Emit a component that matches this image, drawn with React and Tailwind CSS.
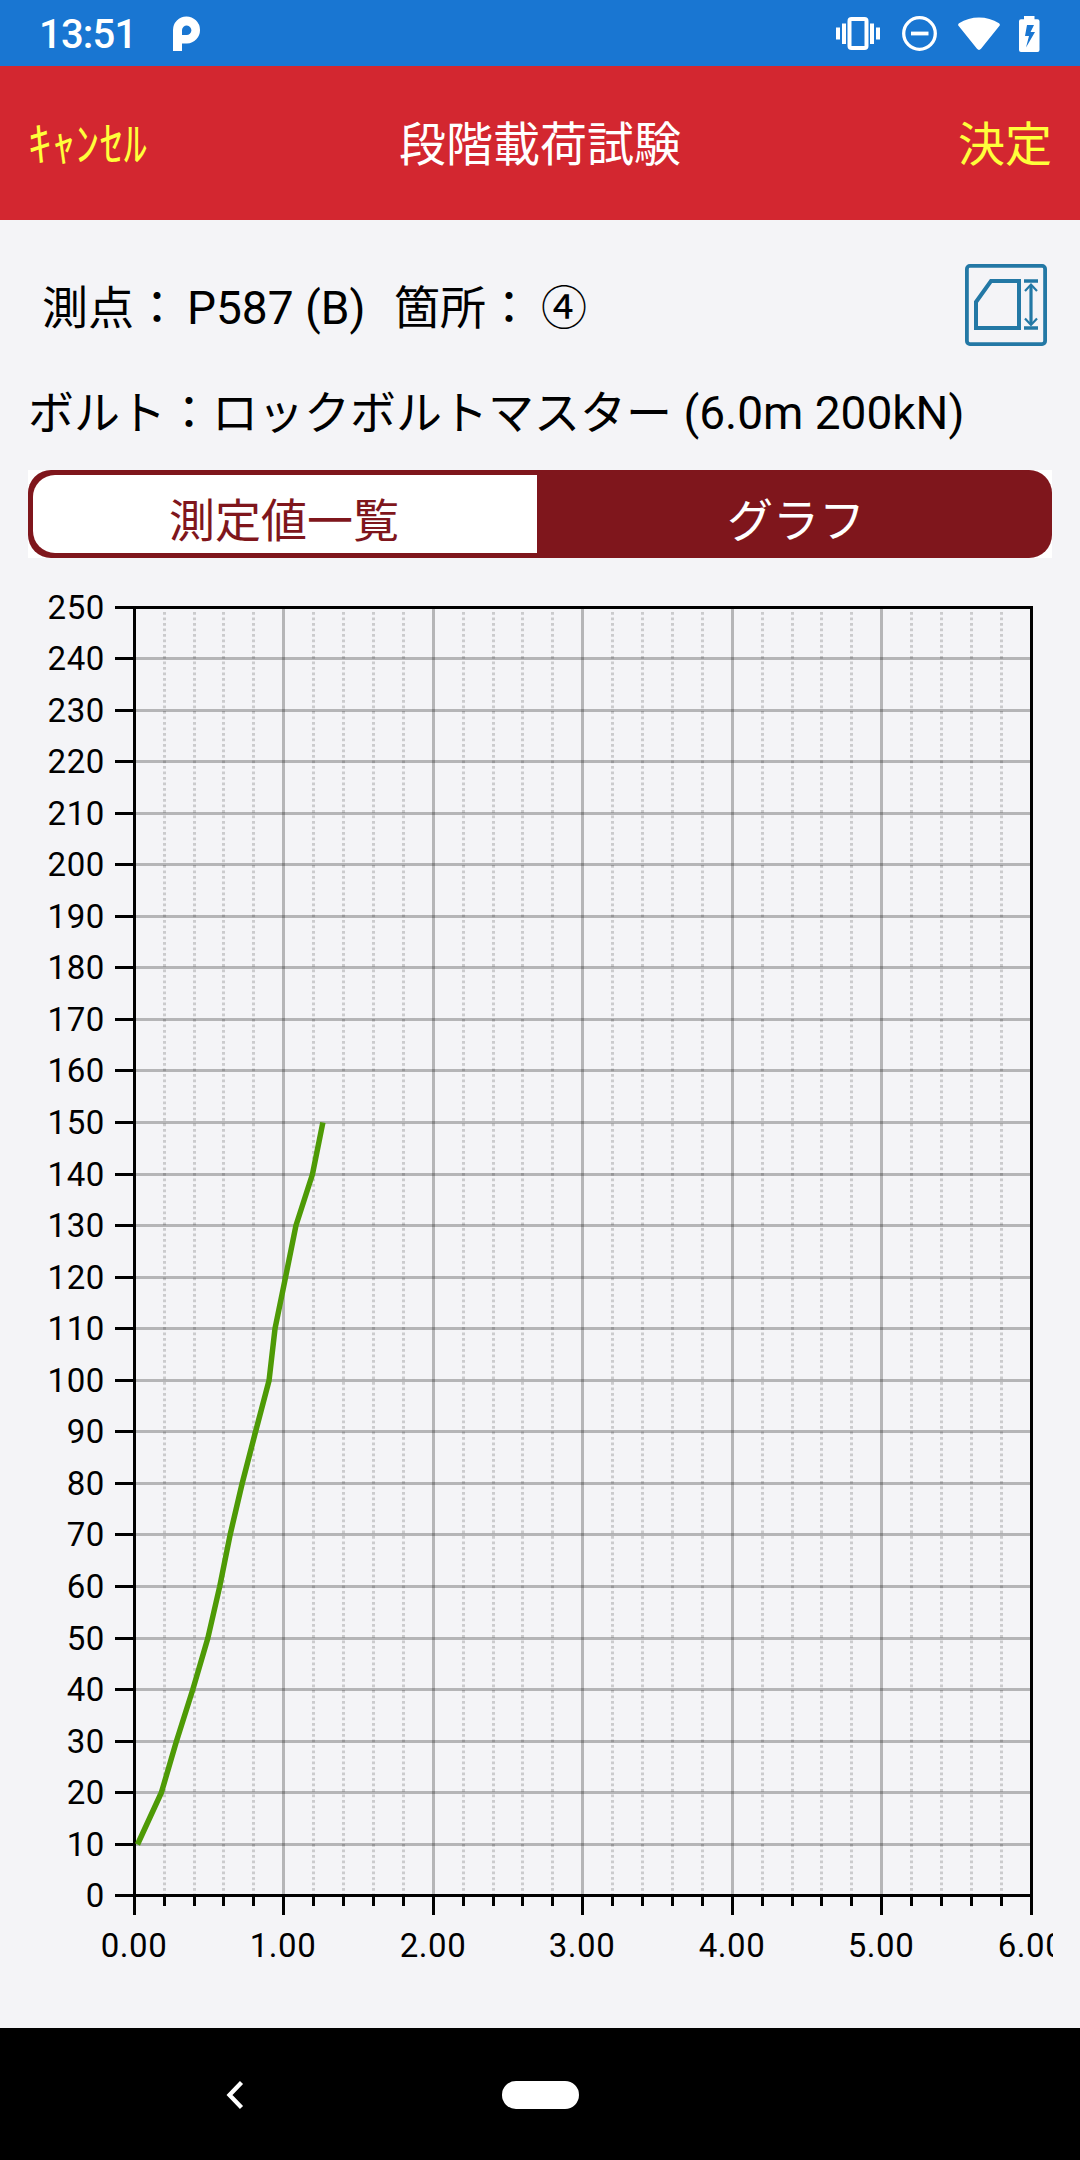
import { useState } from 'react'

const PLOT = { left: 134.5, right: 1031.5, top: 607.5, bottom: 1895.5 }
const MAX_X = 6
const MAX_Y = 250

// [displacement mm, load kN]
const measurements = [
  [0.02, 10],
  [0.18, 20],
  [0.28, 30],
  [0.39, 40],
  [0.49, 50],
  [0.57, 60],
  [0.64, 70],
  [0.72, 80],
  [0.81, 90],
  [0.9, 100],
  [0.94, 110],
  [1.01, 120],
  [1.08, 130],
  [1.19, 140],
  [1.26, 150]
]

// grid lines snap to half pixels so that they stay sharp
const scaleX = value => PLOT.left + Math.floor(value * 149.5 + 0.25)
const scaleY = value => PLOT.top + Math.floor((MAX_Y - value) * 5.1551)

const yTicks = Array.from({ length: 26 }, (_, i) => i * 10)
const xTicks = Array.from({ length: 31 }, (_, i) => i)

function StatusBar() {
  return (
    <div className="flex h-[66px] shrink-0 items-center bg-[#1976d2] text-white">
      <span className="ml-[39px] w-[96px] whitespace-nowrap pt-[4px] text-[40px] font-medium leading-none tracking-[-0.8px]">13:51</span>
      <svg className="ml-[38px] mt-[2px]" width="27" height="36" viewBox="0 0 27 36" fill="currentColor">
        <path
          fillRule="evenodd"
          d="M0 35V14A13.5 13.5 0 1 1 14 27.500H9V35ZM9 19H13.500A4.700 4.700 0 1 0 9 14Z"
        />
      </svg>
      <div className="ml-auto mr-[40px] flex items-center">
        <svg width="44" height="33" viewBox="0 0 44 33" fill="currentColor">
          <path d="M0 10.500h4v12H0zM6 6.500h4v20.500H6zM34 6.500h4v20.500h-4zM40 10.500h4v12h-4z" />
          <rect x="13.500" y="2" width="17" height="29" rx="2" fill="none" stroke="currentColor" strokeWidth="4" />
        </svg>
        <svg className="ml-[22px]" width="35" height="35" viewBox="0 0 35 35" fill="none" stroke="currentColor" strokeWidth="3.3">
          <circle cx="17.500" cy="17.500" r="15.800" />
          <path d="M9 17.500h17.500" strokeWidth="3.8" />
        </svg>
        <svg className="ml-[21px]" width="42" height="33" viewBox="0 0 42 33" fill="currentColor">
          <path d="M.7 9C-.2 7.800 0 7 1 6.300C13-1.600 29-1.600 41 6.300C42 7 42.200 7.800 41.300 9L23 31.800C21.800 33.300 20.200 33.300 19 31.800Z" />
        </svg>
        <svg className="ml-[19px] mt-[1px]" width="21" height="36" viewBox="0 0 21 36" fill="currentColor">
          <path
            fillRule="evenodd"
            d="M5 0h10.500v3.300h3a2 2 0 0 1 2 2V34a2 2 0 0 1-2 2H2a2 2 0 0 1-2-2V5.300a2 2 0 0 1 2-2h3zM8 9L6 20H10L7 31.500L16 16H11.500L15 9Z"
          />
        </svg>
      </div>
    </div>
  )
}

function Header() {
  return (
    <header className="grid h-[154px] shrink-0 grid-cols-3 items-center bg-[#d32730] px-[28px] pt-[5px] text-[47px] text-[#ffff3b]">
      <button className="whitespace-nowrap text-left tracking-[0.4px]">ｷｬﾝｾﾙ</button>
      <h1 className="whitespace-nowrap text-center text-white">段階載荷試験</h1>
      <button className="text-right">決定</button>
    </header>
  )
}

function SectionIcon() {
  return (
    <svg width="82" height="82" viewBox="0 0 82 82" fill="none" stroke="#2378a5">
      <rect x="1.900" y="1.900" width="78.200" height="78.200" rx="3" strokeWidth="3.8" />
      <path d="M11 64V38L26 17H54V64Z" strokeWidth="4" />
      <path d="M59 17h14M59 64h14" strokeWidth="3.6" />
      <path d="M66 21v39" strokeWidth="3.2" />
      <path d="M60 27l6-6.500 6 6.500M60 54.500l6 6.500 6-6.500" strokeWidth="2.2" />
    </svg>
  )
}

function Tabs({ active, onChange }) {
  return (
    <div className="mx-[28px] h-[88px] bg-white">
      <div className="flex h-full rounded-[23px] bg-[#7f161c] p-[5px] text-[46px]" role="tablist">
        <button
          role="tab"
          aria-selected={active === 'list'}
          onClick={() => onChange('list')}
          className="w-[504px] rounded-l-[22px] bg-white pt-[13px] pr-[2px] leading-none text-[#7f161c]"
        >
          測定値一覧
        </button>
        <button
          role="tab"
          aria-selected={active === 'graph'}
          onClick={() => onChange('graph')}
          className="flex-1 pt-[13px] pl-[8px] leading-none text-white"
        >
          グラフ
        </button>
      </div>
    </div>
  )
}

function LoadChart() {
  const points = measurements
    .map(([x, y]) => {
      const px = PLOT.left + (x / MAX_X) * (PLOT.right - PLOT.left)
      return `${px},${scaleY(y)}`
    })
    .join(' ')

  return (
    <svg className="block" width="1053" height="1442" viewBox="0 558 1053 1442">
      <g stroke="#000" strokeOpacity="0.26" strokeWidth="3">
        {yTicks.slice(1, -1).map(value => (
          <line key={value} x1={PLOT.left} x2={PLOT.right} y1={scaleY(value)} y2={scaleY(value)} />
        ))}
      </g>
      {xTicks.slice(1, -1).map(i => {
        const x = scaleX(i / 5)
        const major = i % 5 === 0
        return (
          <line
            key={i}
            x1={x}
            x2={x}
            y1={major ? PLOT.top : PLOT.top + 4.5}
            y2={PLOT.bottom}
            stroke="#000"
            strokeOpacity={major ? 0.26 : 0.17}
            strokeWidth="3"
            strokeDasharray={major ? undefined : '2.75 2.75'}
          />
        )
      })}
      <g stroke="#000" strokeWidth="3">
        {yTicks.map(value => (
          <line key={value} x1="115" x2={PLOT.left} y1={scaleY(value)} y2={scaleY(value)} />
        ))}
        {xTicks.map(i => (
          <line key={i} x1={scaleX(i / 5)} x2={scaleX(i / 5)} y1={PLOT.bottom} y2={i % 5 === 0 ? 1915 : 1906} />
        ))}
        <rect
          x={PLOT.left}
          y={PLOT.top}
          width={PLOT.right - PLOT.left}
          height={PLOT.bottom - PLOT.top}
          fill="none"
        />
      </g>
      <g fontSize="33" letterSpacing="0.6">
        {yTicks.map(value => (
          <text key={value} x="105" y={scaleY(value) + 11} textAnchor="end">{value}</text>
        ))}
        {[0, 1, 2, 3, 4, 5, 6].map(value => (
          <text key={value} x={scaleX(value) - 0.5} y="1957" textAnchor="middle">{value.toFixed(2)}</text>
        ))}
      </g>
      <polyline points={points} fill="none" stroke="#4e9a06" strokeWidth="5.500" strokeLinejoin="round" />
    </svg>
  )
}

export default function App() {
  const [tab, setTab] = useState('graph')

  return (
    <div className="flex h-[2160px] w-[1080px] flex-col overflow-hidden bg-[#f4f4f7] font-[Roboto,'Noto_Sans_CJK_JP',sans-serif] text-black">
      <StatusBar />
      <Header />
      <main className="flex-1">
        <div className="flex h-[170px] items-center justify-between pl-[42px] pr-[33px] text-[46px]">
          <div className="flex whitespace-nowrap pt-[7px]">
            <span className="w-[145px]">測点：</span>
            <span className="w-[207px]">P587 (B)</span>
            <span className="w-[147px]">箇所：</span>
            <span>④</span>
          </div>
          <SectionIcon />
        </div>
        <div className="flex h-[80px] items-start whitespace-nowrap pl-[28px] pt-[1px] text-[46px] leading-[44px]">
          ボルト：ロックボルトマスター (6.0m 200kN)
        </div>
        <Tabs active={tab} onChange={setTab} />
        <LoadChart />
      </main>
      <nav className="flex h-[132px] shrink-0 items-center bg-black">
        <svg className="ml-[226px] mt-[1px]" width="18" height="28" viewBox="0 0 18 28" fill="none" stroke="#fff" strokeWidth="4.3">
          <path d="M15.500 1.500L3.500 14L15.500 26.500" />
        </svg>
        <div className="ml-[258px] mt-[1px] h-7 w-[77px] rounded-full bg-white" />
      </nav>
    </div>
  )
}
